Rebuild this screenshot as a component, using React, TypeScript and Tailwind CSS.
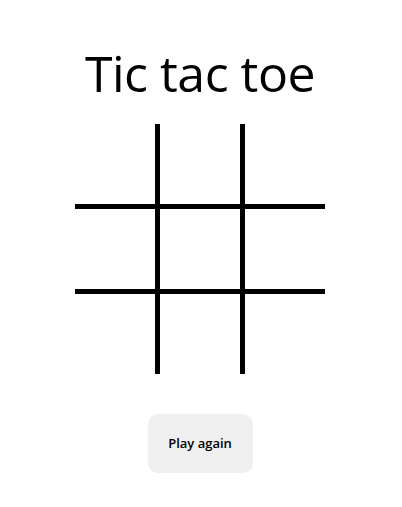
export default function App() {
  const cells = Array.from({ length: 9 }, (_, i) => i)

  return (
    <div className="min-h-screen bg-white font-['Open_Sans',sans-serif] text-black">
      <div className="w-[400px] flex flex-col items-center">
        <h1 className="mt-[48px] text-[50px] leading-none font-normal tracking-[-0.5px]">Tic tac toe</h1>

        {/* Board */}
        <div className="mt-[26px] grid grid-cols-[80px_80px_80px] gap-[5px] bg-black">
          {cells.map((i) => (
            <div key={i} className="h-[80px] w-[80px] bg-white" />
          ))}
        </div>

        <button className="mt-[40px] h-[59px] w-[105px] rounded-[10px] bg-[#efefef] text-[13px] font-semibold">
          Play again
        </button>
      </div>
    </div>
  )
}
